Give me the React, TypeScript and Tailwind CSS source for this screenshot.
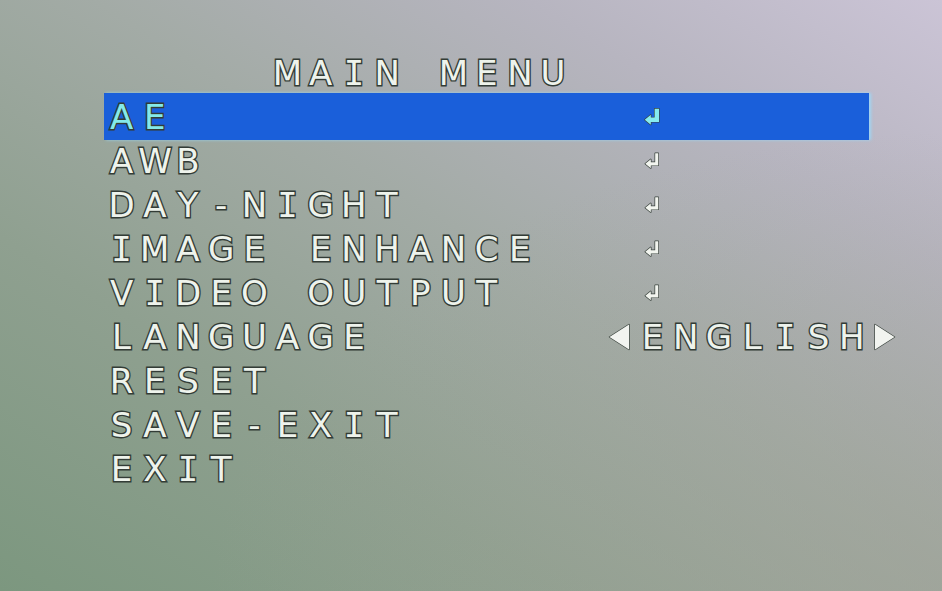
import React from "react";

const CELL = "w-[33.2px] shrink-0 text-center";

function EnterIcon({ selected }: { selected?: boolean }) {
  return (
    <svg width="22" height="22" viewBox="0 0 20 20" className="inline-block">
      <path
        d={
          selected
            ? "M11.5 2.5 H15.5 V14.5 H8 V17 L2.5 12.5 L8 8 V10.5 H11.5 Z"
            : "M12 3 H14.8 V14 H8 V16.5 L3 12.5 L8 8.5 V11.2 H12 Z"
        }
        fill={selected ? "#86ecf0" : "#f2f5ef"}
        stroke="#39423d"
        strokeWidth={selected ? 1.2 : 1.3}
        strokeLinejoin="round"
        style={{ paintOrder: "stroke fill" }}
      />
    </svg>
  );
}

function Tri({ dir }: { dir: "l" | "r" }) {
  return (
    <svg width="24" height="30" viewBox="0 0 24 30" className="inline-block">
      <polygon
        points={dir === "l" ? "22,2.5 22,27.5 2.5,15" : "2,2.5 2,27.5 21.5,15"}
        fill="#f2f4f0"
        stroke="#3d4640"
        strokeWidth="1.4"
        strokeLinejoin="round"
      />
    </svg>
  );
}

function Chars({ text }: { text: string }) {
  return (
    <>
      {text.split("").map((c, i) => (
        <span
          key={i}
          className={CELL + (c === "I" ? " font-['DejaVu_Sans_Mono',monospace]" : "")}
        >
          {c === " " ? "\u00a0" : c}
        </span>
      ))}
    </>
  );
}

function Row({
  label,
  enter,
  lang,
  selected,
}: {
  label: string;
  enter?: boolean;
  lang?: boolean;
  selected?: boolean;
}) {
  const pad = (n: number) =>
    Array.from({ length: n }).map((_, i) => (
      <span key={"p" + i} className={CELL}>
        {"\u00a0"}
      </span>
    ));
  return (
    <div
      className={
        "flex h-[44px] items-center " +
        (selected
          ? "-mt-[2px] -mb-[1px] h-[47px] w-[765px] -ml-[1px] pl-[1px] bg-[#1a5fda] text-[#84eaea] shadow-[2px_0_3px_rgba(150,220,255,0.8)]"
          : "")
      }
    >
      <Chars text={label} />
      {enter && (
        <>
          {pad(16 - label.length)}
          <span className={CELL + " flex items-center justify-center"}>
            <EnterIcon selected={selected} />
          </span>
        </>
      )}
      {lang && (
        <>
          {pad(15 - label.length)}
          <span className={CELL + " flex items-center justify-center"}>
            <Tri dir="l" />
          </span>
          <Chars text="ENGLISH" />
          <span className={CELL + " flex items-center justify-center"}>
            <Tri dir="r" />
          </span>
        </>
      )}
    </div>
  );
}

export default function App() {
  return (
    <div className="relative h-[591px] w-[942px] overflow-hidden bg-[linear-gradient(to_top_right,#7c977f_0%,#8fa090_30%,#a3aba6_55%,#b7b5c0_78%,#cbc4d6_100%)]">
      <div className="absolute inset-0 bg-[radial-gradient(ellipse_at_100%_100%,rgba(160,162,150,0.55),transparent_55%)]" />
      <div className="relative pl-[105px] pt-[51px] font-['DejaVu_Sans',sans-serif] text-[34px] leading-[44px] text-[#eef3ec] [-webkit-text-stroke:2.8px_#333c36] [paint-order:stroke_fill]">
        <div className="flex h-[44px] items-center">
          <Chars text="     MAIN MENU" />
        </div>
        <Row label="AE" enter selected />
        <Row label="AWB" enter />
        <Row label="DAY-NIGHT" enter />
        <Row label="IMAGE ENHANCE" enter />
        <Row label="VIDEO OUTPUT" enter />
        <Row label="LANGUAGE" lang />
        <Row label="RESET" />
        <Row label="SAVE-EXIT" />
        <Row label="EXIT" />
      </div>
    </div>
  );
}
